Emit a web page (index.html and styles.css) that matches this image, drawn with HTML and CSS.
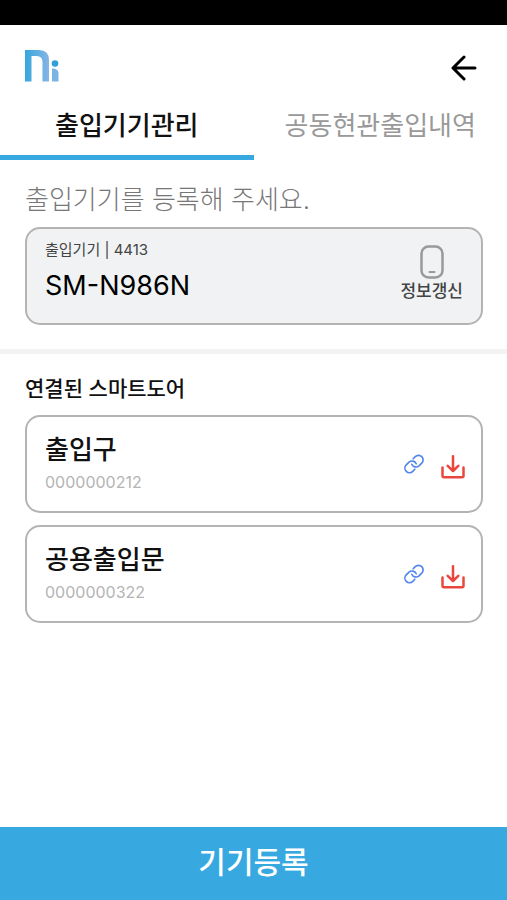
FILE: index.html
```
<!DOCTYPE html>
<html lang="ko">
<head>
<meta charset="utf-8">
<meta name="viewport" content="width=device-width, initial-scale=1">
<title>출입기기관리</title>
<link rel="stylesheet" href="styles.css">
</head>
<body>
<svg class="sprite" aria-hidden="true">
  <symbol id="icon-link" viewBox="0 0 24 24">
    <path d="M9.300 12.300a5.600 5.600 0 0 0 8.700 2l3.300-3.300a5.500 5.500 0 0 0-7.800-7.800L11 5.700M14.700 11.700a5.600 5.600 0 0 0-8.700-2L2.700 13a5.500 5.500 0 0 0 7.800 7.800l2.500-2.500"/>
  </symbol>
  <symbol id="icon-download" viewBox="0 0 24 24">
    <path stroke-width="2.500" d="M1.500 12.500v8.200q0 1.500 1.500 1.500h18q1.500 0 1.500-1.500v-8.200M12 1.200v14.300M6.700 10.800 12 16l5.300-5.200"/>
  </symbol>
</svg>
<div class="status-bar"></div>
<header class="header">
  <svg class="logo" viewBox="0 0 34 33" role="img" aria-label="ni">
    <defs>
      <linearGradient id="brand" x1="0" x2="1" y1="0" y2="0">
        <stop offset="0" stop-color="#36a7dd"/>
        <stop offset="1" stop-color="#85b5e5"/>
      </linearGradient>
    </defs>
    <path fill="url(#brand)" d="M0 1h14q10 0 10 10v21.500h-6.500V13q0-6-6-6H6.500v25.500H0z"/>
    <circle cx="30" cy="14.5" r="3.3" fill="#329fd8"/>
    <path fill="#79b4e4" d="M27 19.500q6.500 0 6.500 5v8H27z"/>
  </svg>
  <button class="icon-button" type="button" aria-label="뒤로">
    <svg class="back-icon" viewBox="0 0 26 26"><path d="M24 13H2M13 2 2 13l11 11"/></svg>
  </button>
</header>
<nav class="tabs">
  <a class="tab tab-active" href="#devices" aria-current="page">출입기기관리</a>
  <a class="tab" href="#history">공동현관출입내역</a>
</nav>
<main class="main">
  <section class="section" id="devices">
    <h1 class="prompt">출입기기를 등록해 주세요.</h1>
    <div class="card card-device">
      <div class="card-text">
        <p class="device-label">출입기기 | 4413</p>
        <p class="device-name">SM-N986N</p>
      </div>
      <button class="refresh" type="button">
        <svg class="phone-icon" viewBox="0 0 24 34"><rect stroke-width="2.500" x="1.500" y="1.500" width="21" height="31" rx="7"/><path d="M9.500 27h5"/></svg>
        정보갱신
      </button>
    </div>
  </section>
  <section class="section section-doors">
    <h2 class="subtitle">연결된 스마트도어</h2>
    <ul class="doors">
      <li class="card">
        <div class="card-text">
          <h3 class="door-name">출입구</h3>
          <p class="door-id">0000000212</p>
        </div>
        <div class="actions">
          <button class="icon-button" type="button" aria-label="연결"><svg class="link-icon"><use href="#icon-link"/></svg></button>
          <button class="icon-button" type="button" aria-label="다운로드"><svg class="download-icon"><use href="#icon-download"/></svg></button>
        </div>
      </li>
      <li class="card">
        <div class="card-text">
          <h3 class="door-name">공용출입문</h3>
          <p class="door-id">0000000322</p>
        </div>
        <div class="actions">
          <button class="icon-button" type="button" aria-label="연결"><svg class="link-icon"><use href="#icon-link"/></svg></button>
          <button class="icon-button" type="button" aria-label="다운로드"><svg class="download-icon"><use href="#icon-download"/></svg></button>
        </div>
      </li>
    </ul>
  </section>
</main>
<button class="register" type="button">기기등록</button>
</body>
</html>
```
FILE: styles.css
```
* {
  box-sizing: border-box;
}

body {
  margin: 0;
  min-height: 100vh;
  display: flex;
  flex-direction: column;
  background: #fff;
  color: #111;
  font-family: Inter, "Noto Sans CJK KR", sans-serif;
}

h1, h2, h3, p, ul {
  margin: 0;
  padding: 0;
}

button {
  border: 0;
  padding: 0;
  background: none;
  font-family: inherit;
}

svg {
  display: block;
  fill: none;
  stroke-linecap: round;
  stroke-linejoin: round;
}

.sprite {
  display: none;
}

.status-bar {
  height: 25px;
  background: #000;
}

.header {
  display: flex;
  align-items: center;
  justify-content: space-between;
  padding: 24px 30px 0 25px;
}

.logo {
  width: 34px;
  height: 33px;
}

.back-icon {
  width: 26px;
  height: 26px;
  margin-top: 4px;
  stroke: #000;
  stroke-width: 3;
}

.tabs {
  display: grid;
  grid-template-columns: 1fr 1fr;
  margin-top: 24px;
}

.tab {
  padding-bottom: 10px;
  border-bottom: 5px solid transparent;
  color: #999;
  font-size: 26px;
  line-height: 39px;
  text-align: center;
  text-decoration: none;
  white-space: nowrap;
}

.tab-active {
  border-color: #38a9e0;
  color: #111;
  font-weight: 500;
}

.main {
  flex: 1;
}

.section {
  padding: 20px 24px 24px 25px;
}

.section-doors {
  border-top: 5px solid #f3f3f3;
}

.prompt {
  margin-bottom: 8px;
  color: #777;
  font-size: 26px;
  font-weight: 300;
  line-height: 39px;
}

.card {
  display: flex;
  align-items: center;
  justify-content: space-between;
  min-height: 98px;
  padding: 12px 16px 16px 18px;
  border: 2px solid #b4b4b4;
  border-radius: 15px;
}

.card-device {
  padding: 9px 18px 13px;
  background: #f0f2f4;
}

.device-label {
  color: #444;
  font-size: 15px;
  line-height: 24px;
}

.device-name {
  color: #000;
  font-size: 27px;
  line-height: 48px;
}

.refresh {
  display: flex;
  flex-direction: column;
  align-items: center;
  color: #444;
  font-size: 17px;
  font-weight: 500;
  line-height: 24px;
}

.phone-icon {
  width: 24px;
  height: 34px;
  stroke: #999;
  stroke-width: 2;
}

.subtitle {
  margin-bottom: 11px;
  font-size: 21px;
  font-weight: 500;
  line-height: 30px;
}

.doors {
  display: grid;
  gap: 12px;
  list-style: none;
}

.door-name {
  font-size: 26px;
  font-weight: 500;
  line-height: 39px;
}

.door-id {
  color: #b4b4b4;
  font-size: 16px;
  line-height: 26px;
}

.actions {
  display: flex;
  align-items: center;
  gap: 17px;
  padding-top: 4px;
}

.link-icon {
  width: 20px;
  height: 20px;
  stroke: #5185ed;
  stroke-width: 2;
}

.download-icon {
  width: 24px;
  height: 24px;
  margin-top: 5px;
  stroke: #e9473d;
}

.register {
  height: 73px;
  padding-bottom: 8px;
  background: #38a9e0;
  color: #fff;
  font-size: 30px;
  font-weight: 500;
}
```
